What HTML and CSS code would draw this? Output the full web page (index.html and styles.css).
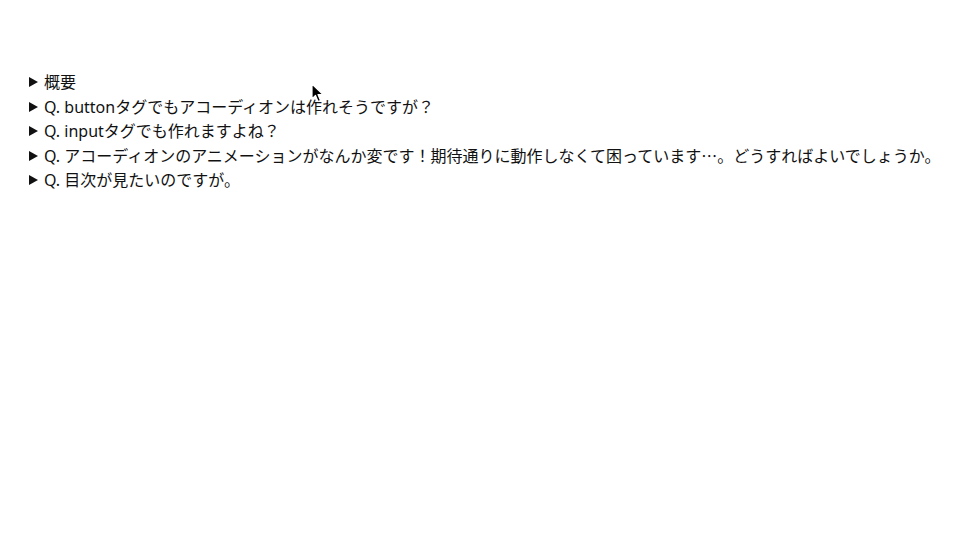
FILE: index.html
```html
<!DOCTYPE html>
<html lang="ja">
<head>
<meta charset="utf-8">
<title>FAQ</title>
<link rel="stylesheet" href="styles.css">
</head>
<body>
<main class="faq">
  <details class="item"><summary class="q">概要</summary></details>
  <details class="item"><summary class="q">Q. buttonタグでもアコーディオンは作れそうですが？</summary></details>
  <details class="item"><summary class="q">Q. inputタグでも作れますよね？</summary></details>
  <details class="item"><summary class="q"><span>Q. アコーディオンのアニメーションがなんか変です！期待通りに動作しなくて困っています<span class="cjk">…</span>。どうすればよいでしょうか。</span></summary></details>
  <details class="item"><summary class="q">Q. 目次が見たいのですが。</summary></details>
</main>
<svg class="cursor" width="13" height="20" viewBox="0 0 13 20" aria-hidden="true">
  <path d="M1 1 L1 16 L4.5 12.5 L7 18.5 L9.5 17.5 L7 11.5 L12 11.5 Z" fill="#000" stroke="#fff" stroke-width="1.2" stroke-linejoin="round"/>
</svg>
</body>
</html>
```
FILE: styles.css
```css
html, body {
  margin: 0;
  padding: 0;
  background: #ffffff;
}
body {
  font-family: "Noto Sans", "Noto Sans CJK JP", sans-serif;
  font-size: 16px;
  color: #111;
  position: relative;
  height: 540px;
  overflow: hidden;
}
.faq {
  padding: 70px 0 0 29px;
  display: flex;
  flex-direction: column;
}
.item {
  margin: 0;
}
.q {
  list-style: none;
  display: flex;
  align-items: center;
  line-height: 24.5px;
  height: 24.5px;
  white-space: nowrap;
  cursor: pointer;
}
.q::-webkit-details-marker {
  display: none;
}
.q::before {
  content: "";
  width: 0;
  height: 0;
  border-left: 9px solid #111;
  border-top: 5px solid transparent;
  border-bottom: 5px solid transparent;
  margin-right: 6px;
  flex: none;
}
.cjk {
  font-family: "Noto Sans CJK JP", sans-serif;
}
.cursor {
  position: absolute;
  left: 311px;
  top: 83px;
}
```
